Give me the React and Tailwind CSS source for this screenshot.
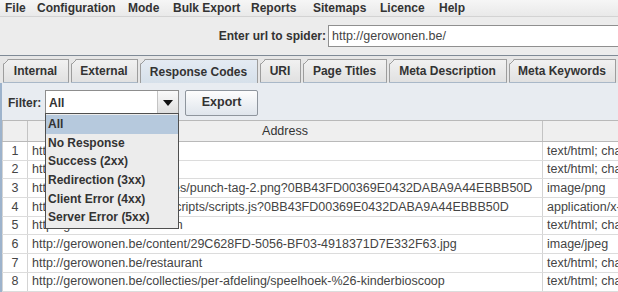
export default function App() {
  const menus = [
    ["File", "w-[32px]"],
    ["Configuration", "w-[91px]"],
    ["Mode", "w-[45px]"],
    ["Bulk Export", "w-[78px]"],
    ["Reports", "w-[62px]"],
    ["Sitemaps", "w-[67px]"],
    ["Licence", "w-[59px]"],
    ["Help", "w-[40px]"],
  ];
  const tabs = [
    ["Internal", "w-[66px]", false],
    ["External", "w-[67px]", false],
    ["Response Codes", "w-[118px]", true],
    ["URI", "w-[41px]", false],
    ["Page Titles", "w-[84px]", false],
    ["Meta Description", "w-[118px]", false],
    ["Meta Keywords", "w-[107px]", false],
  ];
  const rows = [
    ["1", "http://gerowonen.be/", "text/html; charset=UTF-8"],
    ["2", "http://gerowonen.be/nl", "text/html; charset=UTF-8"],
    ["3", "http://gerowonen.be/images/punch-tag-2.png?0BB43FD00369E0432DABA9A44EBBB50D", "image/png"],
    ["4", "http://gerowonen.be/site/scripts/scripts.js?0BB43FD00369E0432DABA9A44EBBB50D", "application/x-javascript"],
    ["5", "http://gerowonen.be/wonen", "text/html; charset=UTF-8"],
    ["6", "http://gerowonen.be/content/29C628FD-5056-BF03-4918371D7E332F63.jpg", "image/jpeg"],
    ["7", "http://gerowonen.be/restaurant", "text/html; charset=UTF-8"],
    ["8", "http://gerowonen.be/collecties/per-afdeling/speelhoek-%26-kinderbioscoop", "text/html; charset=UTF-8"],
  ];
  const options = [
    "All",
    "No Response",
    "Success (2xx)",
    "Redirection (3xx)",
    "Client Error (4xx)",
    "Server Error (5xx)",
  ];

  return (
    <div className="relative w-[618px] h-[292px] overflow-hidden bg-[#ececec] font-['Liberation_Sans',Arial,sans-serif] text-[#333]">
      {/* Menu bar */}
      <div className="h-[17px] flex items-center pl-[5px] bg-[linear-gradient(#f6f6f6,#e9e9e9)] border-b border-[#d3d3d3] text-[12px] font-bold leading-none">
        {menus.map(([m, w]) => (
          <span key={m} className={`${w} shrink-0 whitespace-nowrap`}>{m}</span>
        ))}
      </div>

      {/* URL row */}
      <div className="h-[38px] flex items-center justify-end bg-[#ececec]">
        <span className="text-[12px] font-bold mr-[2px] whitespace-nowrap">Enter url to spider:</span>
        <div className="w-[290px] h-[22px] bg-white border-l border-t border-b border-[#8f8f8f] flex items-center pl-[3px] text-[12.5px] text-[#444]">
          http://gerowonen.be/
        </div>
      </div>

      {/* Tabs */}
      <div className="border-t border-[#7f8a96] bg-[#e6e6e6]">
        <div className="h-[27px] flex items-end gap-[2px] pl-[3px]">
          {tabs.map(([t, w, sel]) => (
            <div
              key={t}
              className={`${w} shrink-0 h-[24px] flex items-center justify-center text-[12px] font-bold whitespace-nowrap border-t border-r border-[#9d9d9d] [clip-path:polygon(5px_0,100%_0,100%_100%,0_100%,0_5px)] ${
                sel
                  ? "bg-[linear-gradient(135deg,transparent_3px,#9d9d9d_3px,#9d9d9d_4px,transparent_4px),linear-gradient(#e4ebf3,#d6e0ea)]"
                  : "bg-[linear-gradient(135deg,transparent_3px,#9d9d9d_3px,#9d9d9d_4px,transparent_4px),linear-gradient(#f1f1f1,#e1e1e1)] border-b border-b-[#a9b8c8]"
              }`}
            >
              <span className="border-l border-[#9d9d9d] h-full w-0 mr-auto" />
              <span className="-ml-px">{t}</span>
              <span className="ml-auto" />
            </div>
          ))}
        </div>
      </div>

      {/* Panel */}
      <div className="h-[209px] bg-[#e8ecf1] border-l-2 border-[#9db3cc] flex flex-col">
        <div className="flex items-center h-[36px] pt-[3px] pl-[6px]">
          <span className="text-[12px] font-bold w-[37px]">Filter:</span>
          <div className="w-[134px] h-[25px] flex bg-white border border-[#8d8d8d]">
            <span className="flex-1 flex items-center pl-[3px] text-[12px] font-bold">All</span>
            <span className="w-[21px] flex items-center justify-center border-l border-[#c4c4c4] bg-[linear-gradient(#fafafa,#dedede)]">
              <svg width="10" height="6" viewBox="0 0 10 6">
                <polygon points="0,0 10,0 5,6" fill="#111" />
              </svg>
            </span>
          </div>
          <div className="ml-[6px] w-[73px] h-[26px] flex items-center justify-center rounded-[2px] border border-[#8e959d] bg-[linear-gradient(#fdfdfd,#dfe5ec)] text-[12.5px] font-bold">
            Export
          </div>
        </div>

        {/* Table */}
        <div className="mt-[1px] flex flex-col bg-white text-[12.5px] text-[#444]">
          <div className="h-[22px] flex bg-[#efefef] border-t border-b border-[#b9b9b9]">
            <div className="w-[26px] shrink-0 border-l border-r border-[#c3c3c3]" />
            <div className="w-[515px] shrink-0 border-r border-[#c3c3c3] flex items-center justify-center text-[#333]">Address</div>
            <div className="flex-1" />
          </div>
          {rows.map(([n, a, t]) => (
            <div key={n} className="h-[18.7px] flex border-b border-[#dcdcdc] leading-none">
              <div className="w-[26px] shrink-0 border-l border-r border-[#d4d4d4] flex items-center justify-center">{n}</div>
              <div className="w-[515px] shrink-0 border-r border-[#d4d4d4] flex items-center pl-[4px] whitespace-nowrap overflow-hidden">{a}</div>
              <div className="flex-1 flex items-center pl-[4px] whitespace-nowrap overflow-hidden">{t}</div>
            </div>
          ))}
        </div>
      </div>

      {/* Dropdown popup */}
      <div className="absolute left-[45px] top-[113px] w-[134px] border border-[#4f4f4f] bg-[#ececec] py-px text-[12px] font-bold text-[#333]">
        {options.map((o, i) => (
          <div
            key={o}
            className={`h-[18.6px] flex items-center pl-[2px] whitespace-nowrap ${i === 0 ? "bg-[#b6c9dd]" : ""}`}
          >
            {o}
          </div>
        ))}
      </div>
    </div>
  );
}
